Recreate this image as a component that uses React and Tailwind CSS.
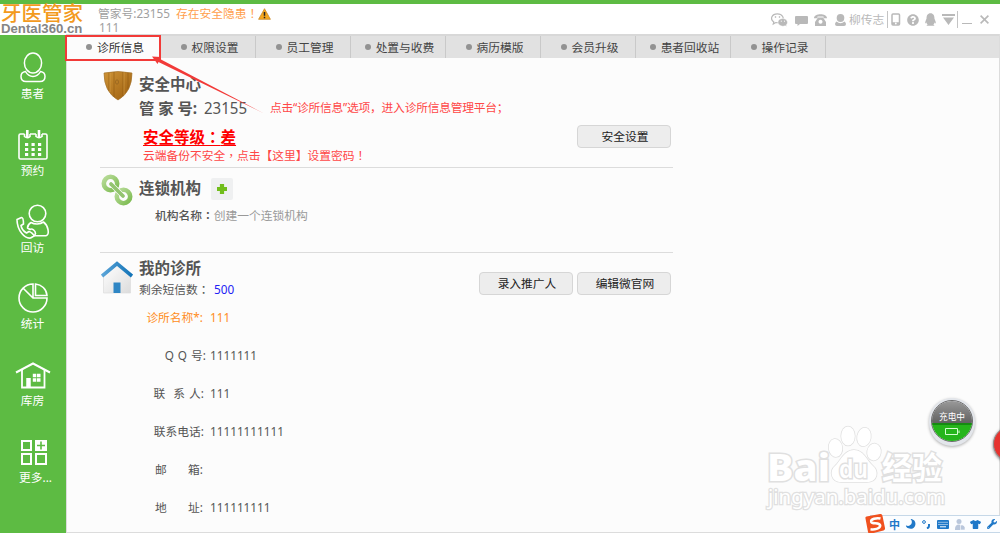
import React, { useState } from 'react';
import { FaQq, FaQuestionCircle, FaTshirt, FaWrench, FaMoon } from 'react-icons/fa';

const tabs = ['诊所信息', '权限设置', '员工管理', '处置与收费', '病历模版', '会员升级', '患者回收站', '操作记录'];

const fields = [
  { label: '诊所名称*:', value: '111', box: 'w-[103px]', color: 'text-[#ff8c1a]' },
  { label: 'Q Q 号:', value: '1111111', box: 'w-[106px] [word-spacing:1px]', color: 'text-[#555]' },
  { label: '联  系 人:', value: '111', box: 'w-[104px] [word-spacing:1px]', color: 'text-[#555]' },
  { label: '联系电话:', value: '11111111111', box: 'w-[104px]', color: 'text-[#555]' },
  { label: '邮       箱:', value: '', box: 'w-[103px]', color: 'text-[#555]' },
  { label: '地       址:', value: '111111111', box: 'w-[103px]', color: 'text-[#555]' },
];

const PatientIcon = () => (
  <svg width="34" height="34" viewBox="0 0 34 34" fill="none" stroke="#fff" strokeWidth="1.5">
    <ellipse cx="17" cy="12" rx="8.6" ry="10" />
    <path d="M9.5 20.5C6 21 5 23.500 5 25.500C5 29 7 30.500 10 30.500H24C27 30.500 29 29 29 25.500C29 23.500 28 21 24.500 20.500C21 27 13 27 9.500 20.500Z" />
  </svg>
);

const CalendarIcon = () => (
  <svg width="34" height="34" viewBox="0 0 34 34" fill="none" stroke="#fff" strokeWidth="1.6">
    <path d="M8.500 6H4.500Q3 6 3 7.500V29.500Q3 31 4.500 31H29.500Q31 31 31 29.500V7.500Q31 6 29.500 6H26M14 6H20" />
    <path d="M8.500 6V8.500Q11.300 11 14 8.500V6M20 6V8.500Q23 11 26 8.500V6" />
    <path d="M11.300 2V9M23 2V9" strokeWidth="2.600" />
    <path d="M9 16.500H26M9 21.500H26M9 26.500H26" strokeWidth="3.200" strokeDasharray="3.200 3.300" />
  </svg>
);

const VisitIcon = () => (
  <svg width="34" height="36" viewBox="0 0 34 36" fill="none" stroke="#fff" strokeWidth="1.6" strokeLinejoin="round">
    <circle cx="21.500" cy="9.500" r="8.300" />
    <path d="M15 18.500C12.500 20 11.500 22 11.500 24L14 25.500C16 24 19.500 26.500 19.500 29.500L18.500 31.800H30C32.500 31 32.500 28 32 25.500C31 21 29.500 19.500 27.500 18C24 20.500 18.500 20.500 15 18.500Z" />
    <path d="M1 15.500L5.500 13.500C7 13.500 7.500 18 7.500 20L5 21.500C5.500 24.500 8 27.500 10.500 29L13 27.500C15 28 18 30.500 18 32L14.500 34C9 35 1 26.500 1 15.500Z" />
  </svg>
);

const ChartIcon = () => (
  <svg width="34" height="34" viewBox="0 0 34 34" fill="none" stroke="#fff" strokeWidth="1.600">
    <path d="M17 17V3A14 14 0 1 0 31 17H17L7.200 7.200" />
    <path d="M19.500 3C25.500 3.500 30.500 8 31 14.500H19.500Z" />
  </svg>
);

const StoreIcon = () => (
  <svg width="36" height="34" viewBox="0 0 36 34" fill="none" stroke="#fff">
    <path d="M1 14.500L18 5.500L35 14.500" strokeWidth="2" />
    <path d="M7 12V29.500H29.500V12" strokeWidth="1.800" />
    <path d="M13.500 30V20" strokeWidth="4.500" />
    <path d="M17.800 17.500H25.500M17.800 22H25.500" strokeWidth="3.600" strokeDasharray="3.500 .7" />
  </svg>
);

const MoreIcon = () => (
  <svg width="34" height="34" viewBox="0 0 34 34" fill="none" stroke="#fff" strokeWidth="2">
    <path d="M6 6H15V15H6ZM6 19H15V29H6ZM20 19H30V29H20Z" />
    <path d="M19 5H31V16H19Z" fill="#fff" stroke="none" />
    <path d="M25 6.500V14.500M21 10.500H29" stroke="#5dbb43" strokeWidth="1.600" />
  </svg>
);

const menu = [
  { name: '患者', icon: <PatientIcon /> },
  { name: '预约', icon: <CalendarIcon /> },
  { name: '回访', icon: <VisitIcon /> },
  { name: '统计', icon: <ChartIcon /> },
  { name: '库房', icon: <StoreIcon /> },
  { name: '更多...', icon: <MoreIcon /> },
];

// punctuation centred in its square
function Mid({ children }) {
  return <span className="font-['Noto_Sans_CJK_TC',sans-serif]">{children}</span>;
}

function Button({ children }) {
  return (
    <button className="w-[94px] h-[23px] rounded-[4px] border border-[#d6d6d6] bg-[#ededed] text-[#222] leading-none flex items-center justify-center pt-px pl-[2px]">
      {children}
    </button>
  );
}

function Header() {
  return (
    <header className="h-8 bg-white flex text-[#a0a0a0] shrink-0">
      <div className="w-[98px] pl-[1px] whitespace-nowrap">
        <div className="h-[19px] text-[20.5px] leading-[19px] font-medium text-[#f39a1d]">牙医管家</div>
        <div className="text-[12px] leading-[13px] font-bold font-['Liberation_Sans',sans-serif] text-[#858585] origin-left scale-x-[1.1]">Dental360.cn</div>
      </div>
      <div className="pt-[2px] whitespace-nowrap">
        <div className="flex items-center h-[14px]">
          <span className="w-[78px]">管家号:23155</span>
          <span className="text-[#ffa04d] w-[82px]">存在安全隐患<Mid>！</Mid></span>
          <svg width="13" height="12" viewBox="0 0 13 12" className="mt-[2px]">
            <path d="M6.500 .7L12.400 11.300H.6Z" fill="#f6a71c" stroke="#c98a2b" strokeWidth=".8" strokeLinejoin="round" />
            <path d="M6.500 4V7.800M6.500 8.700V10.200" stroke="#222" strokeWidth="1.500" />
          </svg>
        </div>
        <div className="h-[14px] leading-[14px] pl-[1px]">111</div>
      </div>
      <div className="ml-auto h-[31px] flex items-center text-[#b9b9b9] pr-[11px]">
        <svg width="17" height="14" viewBox="0 0 17 14" fill="#fff" stroke="currentColor">
          <path d="M2.300 11L2.800 9C-1.500 6 1 .8 6.300 .8C11.500 .8 14 5.500 10.500 8.500C8.500 10 6.500 9.900 4.800 9.600Z" strokeWidth="1.200" />
          <circle cx="4.500" cy="4" r=".5" />
          <circle cx="8.500" cy="4" r=".5" />
          <path d="M15.800 13.500L14.300 12.800C10 14.300 6.500 11.500 7 8.800C7.800 4.500 15.500 4.300 16.400 8.800C16.600 10 16.200 11 15.300 11.900Z" fill="currentColor" stroke="#fff" strokeWidth=".5" />
          <path d="M9.800 8.200H10.800M13 8.200H14" stroke="#fff" />
        </svg>
        <svg className="ml-[7px] mt-[2px]" width="13" height="10" viewBox="0 0 13 10" fill="currentColor">
          <path d="M1 0H12Q13 0 13 1V7Q13 8 12 8H5L2.500 10V8H1Q0 8 0 7V1Q0 0 1 0Z" />
        </svg>
        <svg className="ml-[6px]" width="13" height="12" viewBox="0 0 13 12" fill="currentColor">
          <path d="M0 4.200C0 -1.200 13 -1.200 13 4.200H9.500V2.600H3.500V4.200Z" />
          <path fillRule="evenodd" d="M4 3.500H9L12 8V12H1V8ZM6.500 5.800A2 2 0 1 0 6.510 5.800Z" />
        </svg>
        <svg className="ml-[8px]" width="11" height="12" viewBox="0 0 11 12" fill="currentColor">
          <ellipse cx="5.500" cy="4" rx="3.800" ry="4" />
          <path d="M1.500 7.500Q5.500 11 9.500 7.500Q11 8.500 11 10Q11 12 9 12H2Q0 12 0 10Q0 8.500 1.500 7.500Z" />
        </svg>
        <span className="ml-[3px] w-[38px] whitespace-nowrap -mt-px">柳传志</span>
        <i className="w-px h-[17px] bg-[#c4c4c4]" />
        <svg className="ml-[3px]" width="10" height="13" viewBox="0 0 10 13">
          <rect x="1" y="1" width="7.500" height="11" rx="1" fill="none" stroke="currentColor" strokeWidth="1.500" />
          <path d="M1 10.500H8.500" stroke="currentColor" strokeWidth="2.500" />
          <circle cx="4.800" cy="10.500" r=".9" fill="#fff" />
        </svg>
        <FaQuestionCircle className="ml-[6px] w-[12px] h-[12px]" />
        <FaQq className="ml-[6px] w-[11px] h-[13px]" />
        <svg className="ml-[6px]" width="13" height="11" viewBox="0 0 13 11" fill="currentColor">
          <path d="M0 0H13V2H0ZM1 3.500H12L6.500 11Z" />
        </svg>
        <i className="ml-[2px] w-px h-[17px] bg-[#c4c4c4]" />
        <i className="ml-[4px] mt-[7px] w-[10px] h-px bg-[#b9b9b9]" />
        <svg className="ml-[8px]" width="9" height="9" viewBox="0 0 9 9" stroke="currentColor" strokeWidth="1.600">
          <path d="M.6 .6L8.400 8.400M8.400 .6L.6 8.400" />
        </svg>
      </div>
    </header>
  );
}

function Sidebar() {
  return (
    <nav className="w-[66px] bg-[#5dbb43] shrink-0 pt-[15px] -mt-px">
      {menu.map(item => (
        <div key={item.name} className="h-[76.8px] flex flex-col items-center pr-[1px] text-white">
          <div className="h-9 flex items-center">{item.icon}</div>
          <div className={`-mt-px leading-[16px] whitespace-nowrap ${item.name === '更多...' ? 'pl-[6px]' : ''}`}>{item.name}</div>
        </div>
      ))}
    </nav>
  );
}

function ShieldIcon() {
  return (
    <svg width="30" height="30" viewBox="0 0 30 30">
      <defs>
        <linearGradient id="wood" x1="0" y1="0" x2="1" y2="1">
          <stop offset="0" stopColor="#cf9437" />
          <stop offset="1" stopColor="#9c5e0e" />
        </linearGradient>
      </defs>
      <path d="M1 2Q15 -1 29 2Q29 21 15 29Q1 21 1 2Z" fill="url(#wood)" stroke="#a3732c" strokeWidth=".7" />
      <path d="M6 2V20M11 1V26M20 1V25M25 2V18" stroke="#85500f" strokeWidth=".5" />
      <path d="M7 2V21M21 1V24" stroke="#dda951" strokeWidth=".5" />
      <ellipse cx="14" cy="11" rx="1.500" ry="2.200" fill="none" stroke="#91601e" strokeWidth=".7" />
    </svg>
  );
}

function ChainIcon() {
  return (
    <svg width="32" height="32" viewBox="0 0 32 32" fill="none">
      <defs>
        <linearGradient id="chain" x1="0" y1="0" x2="1" y2="1">
          <stop offset="0" stopColor="#b9dc9a" />
          <stop offset="1" stopColor="#7cbb50" />
        </linearGradient>
      </defs>
      <circle cx="9.500" cy="9.500" r="6.700" stroke="url(#chain)" strokeWidth="4.600" />
      <circle cx="22.500" cy="22.500" r="6.700" stroke="url(#chain)" strokeWidth="4.600" />
      <path d="M10 10L22 22" stroke="#fff" strokeWidth="4.800" strokeLinecap="round" />
      <path d="M10 10L22 22" stroke="#93c470" strokeWidth="3.800" strokeLinecap="round" />
    </svg>
  );
}

function HomeIcon() {
  return (
    <svg width="32" height="33" viewBox="0 0 32 33" fill="none">
      <defs>
        <linearGradient id="wall" x1="0" y1="0" x2="1" y2="1">
          <stop offset="0" stopColor="#fff" />
          <stop offset="1" stopColor="#dcdcdc" />
        </linearGradient>
        <linearGradient id="roof" x1="0" y1="0" x2="1" y2="0">
          <stop offset="0" stopColor="#5ca5d8" />
          <stop offset="1" stopColor="#1273b7" />
        </linearGradient>
      </defs>
      <path d="M2.500 14L16 4L29.500 14V32H2.500Z" fill="url(#wall)" stroke="#ddd" strokeWidth=".7" />
      <path d="M1 15L16 2.500L31 15" stroke="url(#roof)" strokeWidth="3.600" />
      <path d="M12.500 21.500H19.500V32H12.500Z" fill="#2f86c4" />
    </svg>
  );
}

// paw and lettering in the corner
function Watermark() {
  return (
    <svg className="absolute left-[760px] top-[420px]" width="195" height="95" viewBox="0 0 195 95" fill="#fff" stroke="#e0e0e0" strokeWidth="1.500">
      <g fontFamily='"Noto Sans", "Noto Sans CJK SC", sans-serif' paintOrder="stroke">
        <text x="7" y="61" fontSize="37" fontWeight="800" strokeWidth="3" textLength="63" lengthAdjust="spacingAndGlyphs">Bai</text>
        <ellipse cx="75.500" cy="28" rx="6.800" ry="9" transform="rotate(-8 75 28)" />
        <ellipse cx="88" cy="16" rx="6.800" ry="9.500" />
        <ellipse cx="104" cy="17" rx="6.800" ry="9.300" transform="rotate(10 104 17)" />
        <ellipse cx="114" cy="32" rx="6.800" ry="8.500" transform="rotate(10 114 32)" />
        <path d="M94 30C84 30 80 42 75 46C69 51 71 62 81 62H107C118 62 119 51 113 46C106 40 104 30 94 30Z" />
        <text x="79" y="58" fontSize="25" fontWeight="600" strokeWidth="3" textLength="29" lengthAdjust="spacingAndGlyphs">du</text>
        <text x="122" y="59" fontSize="31" fontWeight="700" strokeWidth="3" textLength="60" lengthAdjust="spacingAndGlyphs">经验</text>
        <text x="8" y="84" fontSize="20" strokeWidth="2.500" textLength="177" lengthAdjust="spacingAndGlyphs">jingyan.baidu.com</text>
      </g>
    </svg>
  );
}

function ChargeBall() {
  return (
    <div className="absolute left-[929px] top-[398px] w-[46px] h-[48px] rounded-full bg-[#e3e6eb] shadow-[0_1px_3px_rgba(0,0,0,0.3)] p-[2px]">
      <div className="w-[42px] h-[42px] rounded-full overflow-hidden border border-[#6b6b6b] text-white flex flex-col">
        <div className="h-[22px] bg-gradient-to-b from-[#999] to-[#626262] text-[8.7px] leading-[8px] pt-[12px] text-center whitespace-nowrap">充电中</div>
        <div className="flex-1 border-t-2 border-[#168a12] bg-[#25b51b] flex justify-center pt-[3px]">
          <svg width="15" height="8" viewBox="0 0 15 8" fill="none" stroke="#d4ffd0">
            <path d="M.5 .5H12.500V6.500H.5ZM14 2.500V5" />
          </svg>
        </div>
      </div>
    </div>
  );
}

function InputBar() {
  return (
    <div className="absolute left-[870px] top-[515px] w-[130px] h-[18px] bg-[#fbfdff] border-y border-[#c6d8e8] flex items-center text-[#1f78c8]">
      <svg className="ml-[-5px] shrink-0" width="21" height="20" viewBox="0 0 21 20">
        <path d="M.5 4.500Q0 3 1.500 2.600L15 0Q17 -.2 17.400 1.500L20 14Q20.300 16 18.500 16.500L5.500 19.800Q3.500 20 3 18Z" fill="#f0511f" />
        <path d="M15.500 4.500C11.500 3.500 5.500 5 6.200 7.800C7 10.500 14.800 8 15.200 11.500C15.200 15 9 15.800 5.500 15.200" stroke="#fff" strokeWidth="2.500" fill="none" />
      </svg>
      <span className="ml-[3px] w-[12px] text-[11px] leading-none font-bold">中</span>
      <FaMoon className="ml-[5px] w-[10px] h-[10px] -scale-x-100 rotate-[15deg] shrink-0" />
      <svg className="ml-[6px] shrink-0" width="9" height="9" viewBox="0 0 9 9" fill="none" stroke="currentColor">
        <circle cx="2" cy="2" r="1.400" />
        <path d="M7 4V6Q7 7.500 5 8.500" strokeWidth="2" />
      </svg>
      <svg className="ml-[6px] shrink-0" width="12" height="9" viewBox="0 0 12 9">
        <rect width="12" height="9" rx="1" fill="currentColor" />
        <path d="M1.500 2.300H11M1.500 4.500H11" stroke="#fff" strokeDasharray="1 1" />
        <path d="M3 6.800H9" stroke="#fff" />
      </svg>
      <svg className="ml-[6px] shrink-0" width="10" height="11" viewBox="0 0 10 11" fill="#b9c7dc">
        <circle cx="4" cy="2.500" r="2.500" />
        <path d="M0 10Q0 5.500 4 5.500Q6 5.500 6.500 7V11H0Z" />
        <path d="M5.500 6H8L10 8V11H5.500Z" stroke="#fff" strokeWidth=".6" />
      </svg>
      <FaTshirt className="ml-[5px] w-[11px] h-[11px] shrink-0" />
      <FaWrench className="ml-[6px] w-[10px] h-[10px] shrink-0" />
    </div>
  );
}

export default function App() {
  const [active, setActive] = useState('诊所信息');

  return (
    <div className="relative w-[1000px] h-[533px] overflow-hidden bg-[#fcfcfc] flex flex-col text-[11.75px] leading-[16px] font-['Noto_Sans','Noto_Sans_CJK_SC',sans-serif]">
      <div className="h-1 bg-[#5dbb43] shrink-0" />
      <Header />

      <div className="flex flex-1 min-h-0">
        <Sidebar />
        <div className="flex-1 flex flex-col border-r border-b border-[#dcdcdc] -mt-[2px] border-l">
          <div className="h-6 bg-[#e1e1e1] border-t-2 border-[#d8d8d8] flex shrink-0">
            {tabs.map(tab => (
              <button
                key={tab}
                onClick={() => setActive(tab)}
                className={`w-[95px] first:w-[94px] flex items-center justify-center gap-[5px] pt-[2px] pl-[3px] leading-none whitespace-nowrap border-r border-[#c9c9c9] ${
                  active === tab ? 'bg-[#fcfcfc] text-[#333]' : 'text-[#444]'
                }`}
              >
                <i className="w-[6px] h-[6px] rounded-full bg-[#929292] mb-[3px]" />
                {tab}
              </button>
            ))}
          </div>

          <main className="ml-[33px] w-[573px] text-[#555]">
            <section className="h-[110px] border-b border-[#dcdcdc] flex">
              <div className="w-[39px] pl-[3px] pt-[13px]"><ShieldIcon /></div>
              <div className="flex-1 pt-[14px] whitespace-nowrap">
                <h2 className="text-[15.5px] font-bold leading-[24px]">安全中心</h2>
                <div className="text-[15.3px] leading-[24px] flex">
                  <b className="w-[65px]">管 家 号:</b>
                  <span className="text-[16.2px] origin-left scale-x-[0.93]">23155</span>
                </div>
                <div className="pl-[4px] mt-[4px] text-[15.5px] leading-[24px] font-bold text-[#f00] underline decoration-1 underline-offset-2">安全等级<Mid>：</Mid>差</div>
                <div className="pl-[4px] -mt-[2px] leading-[16px] text-[#ff4747]">云端备份不安全<Mid>，</Mid>点击【这里】设置密码<Mid>！</Mid></div>
              </div>
              <div className="pt-[67px] pr-[2px]"><Button>安全设置</Button></div>
            </section>

            <section className="h-[85px] border-b border-[#dcdcdc] flex">
              <div className="w-[39px] pl-[1px] pt-[6px]"><ChainIcon /></div>
              <div className="pt-[9px]">
                <div className="flex items-center h-[23px]">
                  <h2 className="text-[15.5px] font-bold w-[72px] leading-[23px]">连锁机构</h2>
                  <button className="w-[22px] h-[22px] bg-[#eff0f1] flex items-center justify-center rounded-[2px]">
                    <svg width="12" height="12" viewBox="0 0 12 12"><path d="M6 1V11M1 6H11" stroke="#71bd1b" strokeWidth="4.200" /></svg>
                  </button>
                </div>
                <div className="mt-[7px] pl-[16px]">
                  <span className="font-medium">机构名称<Mid>：</Mid></span>
                  <span className="text-[#999]">创建一个连锁机构</span>
                </div>
              </div>
            </section>

            <section>
              <div className="flex h-[52px]">
                <div className="w-[39px] pl-[1px] pt-[8px]"><HomeIcon /></div>
                <div className="flex-1 pt-[3px]">
                  <h2 className="text-[15.5px] font-bold leading-[24px]">我的诊所</h2>
                  <div className="mt-px flex">
                    <span className="w-[75px]">剩余短信数<Mid>：</Mid></span>
                    <span className="text-[#2222f5]">500</span>
                  </div>
                </div>
                <div className="flex gap-1 pt-[19px] pr-[2px]">
                  <Button>录入推广人</Button>
                  <Button>编辑微官网</Button>
                </div>
              </div>
              <div className="-mt-[7px]">
                {fields.map(f => (
                  <div key={f.label} className={`h-[38px] flex items-center ${f.color}`}>
                    <div className="w-[110px]">
                      <div className={`${f.box} text-right whitespace-pre`}>{f.label}</div>
                    </div>
                    <div>{f.value}</div>
                  </div>
                ))}
              </div>
            </section>
          </main>
        </div>
      </div>

      <Watermark />
      <ChargeBall />
      <div className="absolute left-[993px] top-[426px] w-9 h-9 rounded-full bg-[#e6332f] border border-[#8f8f8f] shadow-[0_1px_3px_rgba(0,0,0,0.5)]" />
      <InputBar />

      <div className="absolute left-[65px] top-[35px] w-[96px] h-[26px] border-2 border-[#f23a38]" />
      <svg className="absolute left-[150px] top-[54px]" width="116" height="62" viewBox="0 0 116 62" fill="#f23a38">
        <path d="M2 2.500L11 3L10.500 5.200L114 59.500L8.500 8L7.500 10Z" />
      </svg>
      <div className="absolute left-[270px] top-[99px] leading-[16px] text-[#ff4747] whitespace-nowrap tracking-[-0.02em]">
        点击“诊所信息”选项，进入诊所信息管理平台；
      </div>
    </div>
  );
}
